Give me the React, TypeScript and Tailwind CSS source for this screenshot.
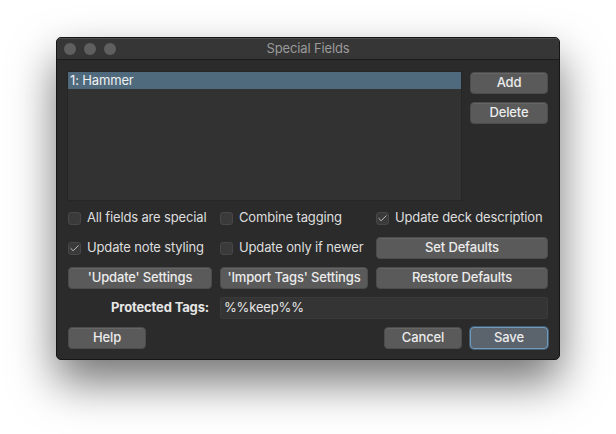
import { Check } from "lucide-react";

type BoxProps = { label: string; checked?: boolean };

function CheckRow({ label, checked }: BoxProps) {
  return (
    <label className="flex h-[22px] items-center gap-[6px]">
      <span className="flex h-[13px] w-[13px] items-center justify-center rounded-[3px] border border-[#474747] bg-[#3a3a3a]">
        {checked && <Check className="h-[11px] w-[11px] text-[#c8c8c8]" strokeWidth={2} />}
      </span>
      <span className="text-[#dedede]">{label}</span>
    </label>
  );
}

function Button({ children, className = "", primary }: { children: string; className?: string; primary?: boolean }) {
  return (
    <button
      className={`h-[22px] rounded-[4px] text-[13px] font-medium tracking-[-0.15px] text-[#ececec] ${
        primary
          ? "border border-[#6f9bbf] bg-[#5b636c] shadow-[0_0_0_1px_rgba(104,150,190,0.45)]"
          : "border border-[#4c4c4c] bg-[#5a5a5a] shadow-[inset_0_1px_0_rgba(255,255,255,0.08)]"
      } ${className}`}
    >
      {children}
    </button>
  );
}

export default function App() {
  return (
    <div
      className="flex min-h-screen justify-center bg-white pt-[37px] text-[13px] tracking-[-0.15px]"
      style={{ fontFamily: "Inter, 'Liberation Sans', sans-serif" }}
    >
      <div className="flex h-[323px] w-[504px] flex-col overflow-hidden rounded-[5px] border border-[#151515] bg-[#2b2b2b] shadow-[0_22px_45px_rgba(0,0,0,0.55)]">
        <div className="relative flex h-[22px] shrink-0 items-center border-b border-[#1b1b1b] bg-[#363636] shadow-[inset_0_1px_0_rgba(255,255,255,0.12)]">
          <div className="ml-[7px] flex gap-[8px]">
            <span className="h-[12px] w-[12px] rounded-full bg-[#5f5f5f]" />
            <span className="h-[12px] w-[12px] rounded-full bg-[#5f5f5f]" />
            <span className="h-[12px] w-[12px] rounded-full bg-[#5f5f5f]" />
          </div>
          <div className="absolute inset-0 flex items-center justify-center text-[#9a9a9a]">Special Fields</div>
        </div>

        <div className="flex flex-1 flex-col px-[11px] pt-[11px]">
          <div className="flex gap-[8px]">
            <div className="-ml-px h-[130px] w-[396px] border border-[#262626] bg-[#323232]">
              <div className="flex h-[17px] items-center bg-[#4f697d] px-[2px] text-[#f0f0f0]">1: Hammer</div>
            </div>
            <div className="flex flex-col gap-[8px] pt-px">
              <Button className="w-[78px]">Add</Button>
              <Button className="w-[78px]">Delete</Button>
            </div>
          </div>

          <div className="mt-[6px] grid grid-cols-[144px_148px_172px] gap-x-[8px] gap-y-[8px]">
            <CheckRow label="All fields are special" />
            <CheckRow label="Combine tagging" />
            <CheckRow label="Update deck description" checked />
            <CheckRow label="Update note styling" checked />
            <CheckRow label="Update only if newer" />
            <Button>Set Defaults</Button>
            <Button>'Update' Settings</Button>
            <Button>'Import Tags' Settings</Button>
            <Button>Restore Defaults</Button>
            <div className="flex h-[22px] items-center justify-end pr-[3px] font-bold text-[#e6e6e6]">Protected Tags:</div>
            <div className="col-span-2 flex h-[22px] items-center rounded-[2px] border border-[#3a3a3a] bg-[#343434] px-[3px] text-[#e6e6e6]">
              %%keep%%
            </div>
          </div>

          <div className="mt-[8px] flex gap-[8px]">
            <Button className="w-[78px]">Help</Button>
            <div className="flex-1" />
            <Button className="w-[78px]">Cancel</Button>
            <Button className="w-[78px]" primary>
              Save
            </Button>
          </div>
        </div>
      </div>
    </div>
  );
}
